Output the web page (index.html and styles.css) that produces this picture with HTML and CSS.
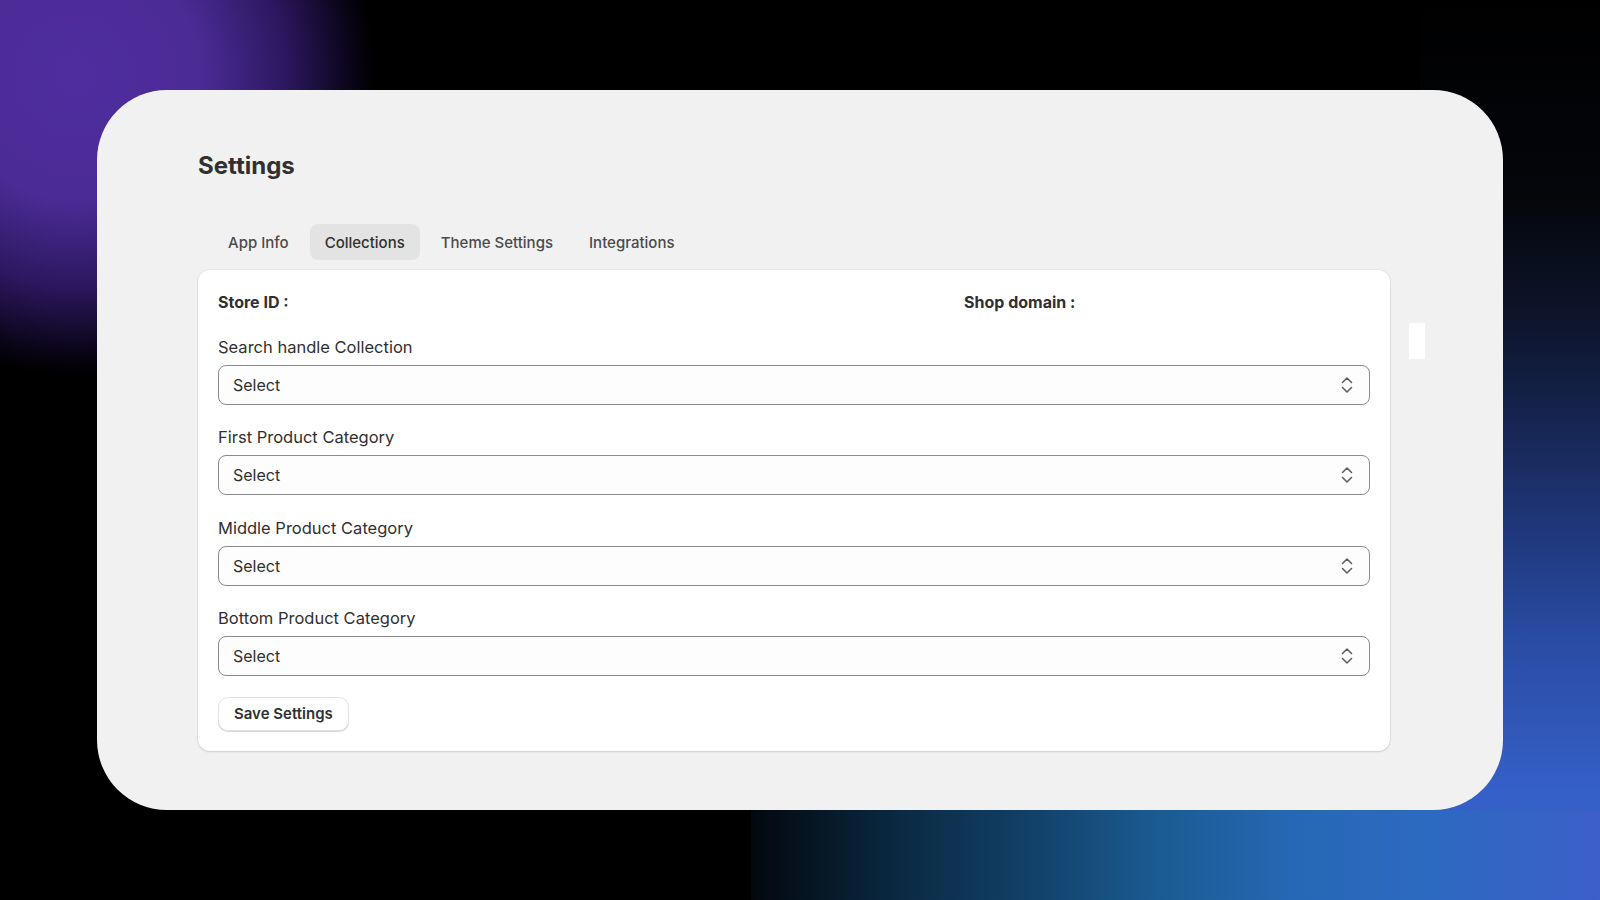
FILE: index.html
```html
<!DOCTYPE html>
<html lang="en">

<head>
  <meta charset="UTF-8" />
  <meta name="viewport" content="width=device-width, initial-scale=1.0" />
  <title>Settings</title>
  <link rel="stylesheet" href="styles.css">
</head>

<body>

  <div class="stage">
    <div class="panel">
      <h1 class="title">Settings</h1>

      <div class="tabs">
        <button class="tab">App Info</button>
        <button class="tab active">Collections</button>
        <button class="tab">Theme Settings</button>
        <button class="tab">Integrations</button>
      </div>

      <div class="card">
        <div class="meta">
          <span>Store ID :</span>
          <span>Shop domain :</span>
        </div>

        <div class="field">
          <label>Search handle Collection</label>
          <div class="select">
            <span>Select</span>
            <svg class="chevrons" viewBox="0 0 12 16"><path d="M1.5 5.5 6 1l4.5 4.5M1.5 10.5 6 15l4.5-4.5" /></svg>
          </div>
        </div>

        <div class="field">
          <label>First Product Category</label>
          <div class="select">
            <span>Select</span>
            <svg class="chevrons" viewBox="0 0 12 16"><path d="M1.5 5.5 6 1l4.5 4.5M1.5 10.5 6 15l4.5-4.5" /></svg>
          </div>
        </div>

        <div class="field">
          <label>Middle Product Category</label>
          <div class="select">
            <span>Select</span>
            <svg class="chevrons" viewBox="0 0 12 16"><path d="M1.5 5.5 6 1l4.5 4.5M1.5 10.5 6 15l4.5-4.5" /></svg>
          </div>
        </div>

        <div class="field">
          <label>Bottom Product Category</label>
          <div class="select">
            <span>Select</span>
            <svg class="chevrons" viewBox="0 0 12 16"><path d="M1.5 5.5 6 1l4.5 4.5M1.5 10.5 6 15l4.5-4.5" /></svg>
          </div>
        </div>

        <div>
          <button class="save">Save Settings</button>
        </div>
      </div>

      <div class="nub"></div>
    </div>
  </div>

</body>

</html>
```

FILE: styles.css
```css
body {
  margin: 0;
  height: 100vh;
  overflow: hidden;
  font-family: Inter, 'Noto Sans', sans-serif;
  color: #303030;
  background-color: #000;
  background-image:
    linear-gradient(90deg, #03080e 0%, #0b2a44 18%, #113f66 32%, #1b5b92 48%, #2668b5 64%, #2d69c1 80%, #3c5fc8 100%),
    linear-gradient(180deg, #000 0%, #04060b 22%, #0f1833 38%, #1d3371 56%, #2a4da6 72%, #3560c8 88%, #3a62ca 100%),
    radial-gradient(circle 300px at 75px 75px, #4f2d9f 0%, #4b2b95 42%, #2c1860 70%, #0a0518 92%, #000 100%);
  background-repeat: no-repeat;
  background-position: 751px 810px, 1420px 0, 0 0;
  background-size: 849px 90px, 180px 900px, 100% 100%;
}

.stage {
  height: 100%;
  display: flex;
  align-items: center;
  justify-content: center;
}

.panel {
  position: relative;
  box-sizing: border-box;
  width: 1406px;
  height: 720px;
  padding: 60px 113px 0 101px;
  background: #f1f1f1;
  border-radius: 70px;
}

.title {
  margin: 0;
  font-size: 24px;
  line-height: 32px;
  font-weight: 700;
  color: #303030;
}

.tabs {
  display: flex;
  gap: 6px;
  margin-top: 42px;
  padding-left: 15px;
}

.tab {
  height: 36px;
  padding: 0 15px;
  border: none;
  border-radius: 8px;
  background: transparent;
  font-family: inherit;
  font-size: 15px;
  font-weight: 550;
  color: #4a4a4a;
  cursor: pointer;
}

.tab.active {
  background: #e3e3e3;
  color: #303030;
}

.card {
  margin-top: 10px;
  padding: 20px;
  display: flex;
  flex-direction: column;
  gap: 20.5px;
  background: #fff;
  border-radius: 12px;
  box-shadow: 0 0 0 1px rgba(0, 0, 0, 0.04), 0 1px 2px rgba(0, 0, 0, 0.12);
}

.meta {
  display: grid;
  grid-template-columns: 746px 1fr;
  font-size: 16px;
  line-height: 24px;
  font-weight: 700;
  color: #303030;
}

.field label {
  display: block;
  font-size: 16.5px;
  line-height: 24px;
  color: #303030;
}

.select {
  box-sizing: border-box;
  height: 40px;
  margin-top: 6px;
  padding: 0 16px 0 14px;
  display: flex;
  align-items: center;
  justify-content: space-between;
  background: #fdfdfd;
  border: 1px solid #8a8a8a;
  border-radius: 8px;
  font-size: 16px;
  color: #303030;
}

.chevrons {
  width: 12px;
  height: 16px;
  fill: none;
  stroke: #5c5c5c;
  stroke-width: 1.5;
  stroke-linecap: round;
  stroke-linejoin: round;
}

.save {
  height: 34px;
  padding: 0 15px;
  background: #fff;
  border: 1px solid #e3e3e3;
  border-radius: 10px;
  box-shadow: 0 1px 0 #d4d4d4;
  font-family: inherit;
  font-size: 15px;
  font-weight: 600;
  color: #303030;
  cursor: pointer;
}

.nub {
  position: absolute;
  left: 1312px;
  top: 233px;
  width: 16px;
  height: 36px;
  background: #fff;
}
```
